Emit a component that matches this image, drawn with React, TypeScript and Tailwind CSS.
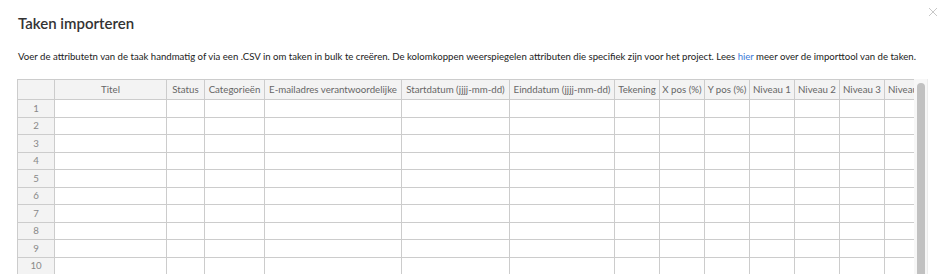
import React from 'react';

const columns = [
  { label: 'Titel', width: 112 },
  { label: 'Status', width: 38 },
  { label: 'Categorieën', width: 60 },
  { label: 'E-mailadres verantwoordelijke', width: 137 },
  { label: 'Startdatum (jjjj-mm-dd)', width: 108 },
  { label: 'Einddatum (jjjj-mm-dd)', width: 105 },
  { label: 'Tekening', width: 45 },
  { label: 'X pos (%)', width: 45 },
  { label: 'Y pos (%)', width: 45 },
  { label: 'Niveau 1', width: 45 },
  { label: 'Niveau 2', width: 45 },
  { label: 'Niveau 3', width: 45 },
  { label: 'Niveau 4', width: 45 },
  { label: 'Niveau 5', width: 45 },
];

const rows = [1, 2, 3, 4, 5, 6, 7, 8, 9, 10, 11];

const App: React.FC = () => {
  return (
    <div className="relative bg-white w-[949px] h-[274px] overflow-hidden text-[#333]" style={{ fontFamily: 'Lato, "Noto Sans", sans-serif' }}>
      <button className="absolute right-[11px] top-[7px] text-[#c8c8c8]">
        <svg width="10" height="10" viewBox="0 0 10 10" stroke="currentColor" strokeWidth="1">
          <path d="M1 1 L9 9 M9 1 L1 9" />
        </svg>
      </button>

      <div className="pl-[18px] pt-[13px]">
        <h2 className="text-[15px] font-semibold leading-[20px] text-[#333]">Taken importeren</h2>
        <p className="mt-[17px] text-[9.6px] leading-[14px] text-[#222] whitespace-nowrap">
          Voer de attributetn van de taak handmatig of via een .CSV in om taken in bulk te creëren. De kolomkoppen weerspiegelen attributen die specifiek zijn voor het project. Lees{' '}
          <a href="#" className="text-[#3d7bd9]">hier</a> meer over de importtool van de taken.
        </p>
      </div>

      <div className="flex ml-[17px] mt-[15px]">
        <div className="w-[897px] overflow-hidden">
          <table className="table-fixed border-collapse text-[9.7px] text-[#666]" style={{ width: 37 + columns.reduce((s, c) => s + c.width, 0) }}>
            <colgroup>
              <col style={{ width: 37 }} />
              {columns.map((c) => (
                <col key={c.label} style={{ width: c.width }} />
              ))}
            </colgroup>
            <thead>
              <tr className="h-[20px] bg-[#f3f3f3]">
                <th className="border border-[#cccccc] font-normal"></th>
                {columns.map((c) => (
                  <th key={c.label} className="border border-[#cccccc] font-normal whitespace-nowrap overflow-hidden px-[2px] text-center">
                    {c.label}
                  </th>
                ))}
              </tr>
            </thead>
            <tbody>
              {rows.map((r) => (
                <tr key={r} className="h-[17.5px]">
                  <td className="border border-[#cccccc] bg-[#f3f3f3] text-center text-[#888]">{r}</td>
                  {columns.map((c) => (
                    <td key={c.label} className="border border-[#cccccc] bg-white"></td>
                  ))}
                </tr>
              ))}
            </tbody>
          </table>
        </div>
        <div className="w-[14px] h-[220px] bg-[#f7f7f7] border-r border-[#ececec] pt-[4px] pl-[3px]">
          <div className="w-[8px] h-full bg-[#c1c1c1] rounded-t-[4px]"></div>
        </div>
      </div>
    </div>
  );
};

export default App;
